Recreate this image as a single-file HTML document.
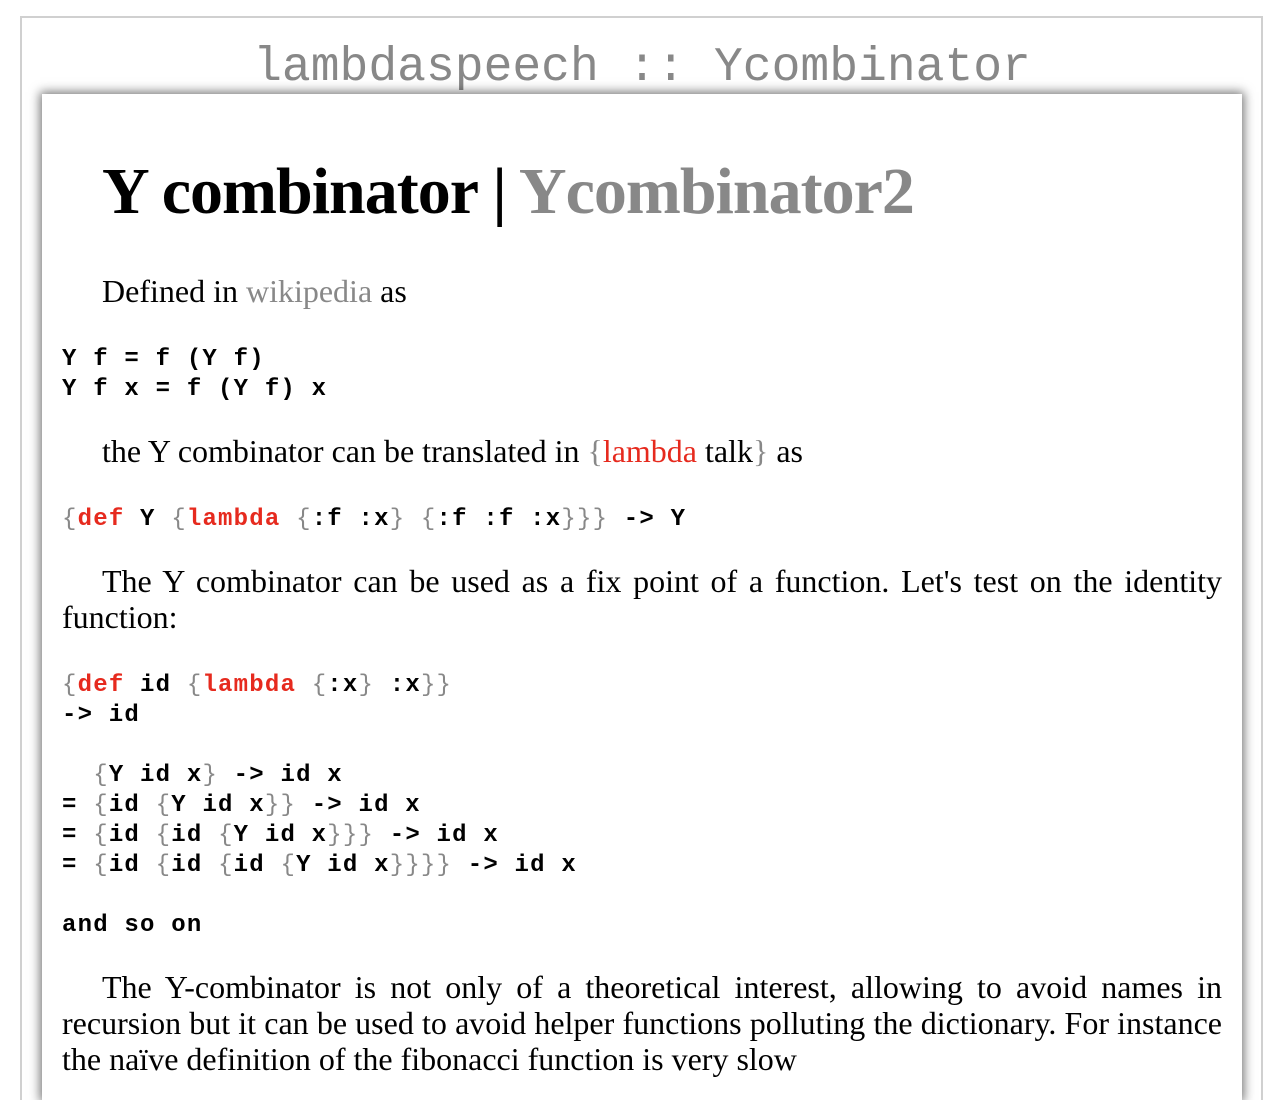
<!DOCTYPE html>
<html><head><meta charset="utf-8"><style>
html,body{margin:0;padding:0;background:#fff;width:1276px;height:1100px;overflow:hidden;position:relative}
.frame{position:absolute;left:20px;top:16px;width:1243px;height:1100px;border:2px solid #d0d0d0;border-bottom:none;box-sizing:border-box}
.title{position:absolute;left:0;width:1284px;top:38px;text-align:center;font:48px "Liberation Mono",monospace;color:#888;line-height:60px;white-space:pre}
.box{position:absolute;left:42px;top:94px;width:1200px;height:1006px;background:#fff;box-shadow:0 0 10px 2px rgba(0,0,0,.55)}
.a{position:absolute;left:62px;width:1160px;font-family:"Liberation Serif",serif;color:#000;white-space:nowrap}
h1{position:absolute;left:102px;top:150px;margin:0;font:bold 66px/84px "Liberation Serif",serif;letter-spacing:-1px;white-space:nowrap}
.g{color:#888}
.p{font-size:32px;line-height:36px;text-indent:40px;white-space:normal;text-align:justify}
.c{font:bold 24px/30px "Liberation Mono",monospace;white-space:pre;letter-spacing:1.2px}
.r{color:#e62a1e}
.b{color:#888;font-weight:normal}
</style></head><body>
<div class="frame"></div>
<div class="title">lambdaspeech :: Ycombinator</div>
<div class="box"></div>
<h1>Y combinator | <span class="g">Ycombinator2</span></h1>
<div class="a p" style="top:273px">Defined in <span class="g">wikipedia</span> as</div>
<div class="a c" style="top:345px">Y f = f (Y f)
Y f x = f (Y f) x</div>
<div class="a p" style="top:433px">the Y combinator can be translated in <span class="g">{</span><span class="r">lambda</span> talk<span class="g">}</span> as</div>
<div class="a c" style="top:505px"><span class="b">{</span><span class="r">def</span> Y <span class="b">{</span><span class="r">lambda</span> <span class="b">{</span>:f :x<span class="b">}</span> <span class="b">{</span>:f :f :x<span class="b">}}}</span> -&gt; Y</div>
<div class="a p" style="top:563px">The Y combinator can be used as a fix point of a function. Let's test on the identity function:</div>
<div class="a c" style="top:671px"><span class="b">{</span><span class="r">def</span> id <span class="b">{</span><span class="r">lambda</span> <span class="b">{</span>:x<span class="b">}</span> :x<span class="b">}}</span>
-&gt; id

  <span class="b">{</span>Y id x<span class="b">}</span> -&gt; id x
= <span class="b">{</span>id <span class="b">{</span>Y id x<span class="b">}}</span> -&gt; id x
= <span class="b">{</span>id <span class="b">{</span>id <span class="b">{</span>Y id x<span class="b">}}}</span> -&gt; id x
= <span class="b">{</span>id <span class="b">{</span>id <span class="b">{</span>id <span class="b">{</span>Y id x<span class="b">}}}}</span> -&gt; id x

and so on</div>
<div class="a p" style="top:969px">The Y-combinator is not only of a theoretical interest, allowing to avoid names in recursion but it can be used to avoid helper functions polluting the dictionary. For instance the naïve definition of the fibonacci function is very slow</div>
</body></html>
